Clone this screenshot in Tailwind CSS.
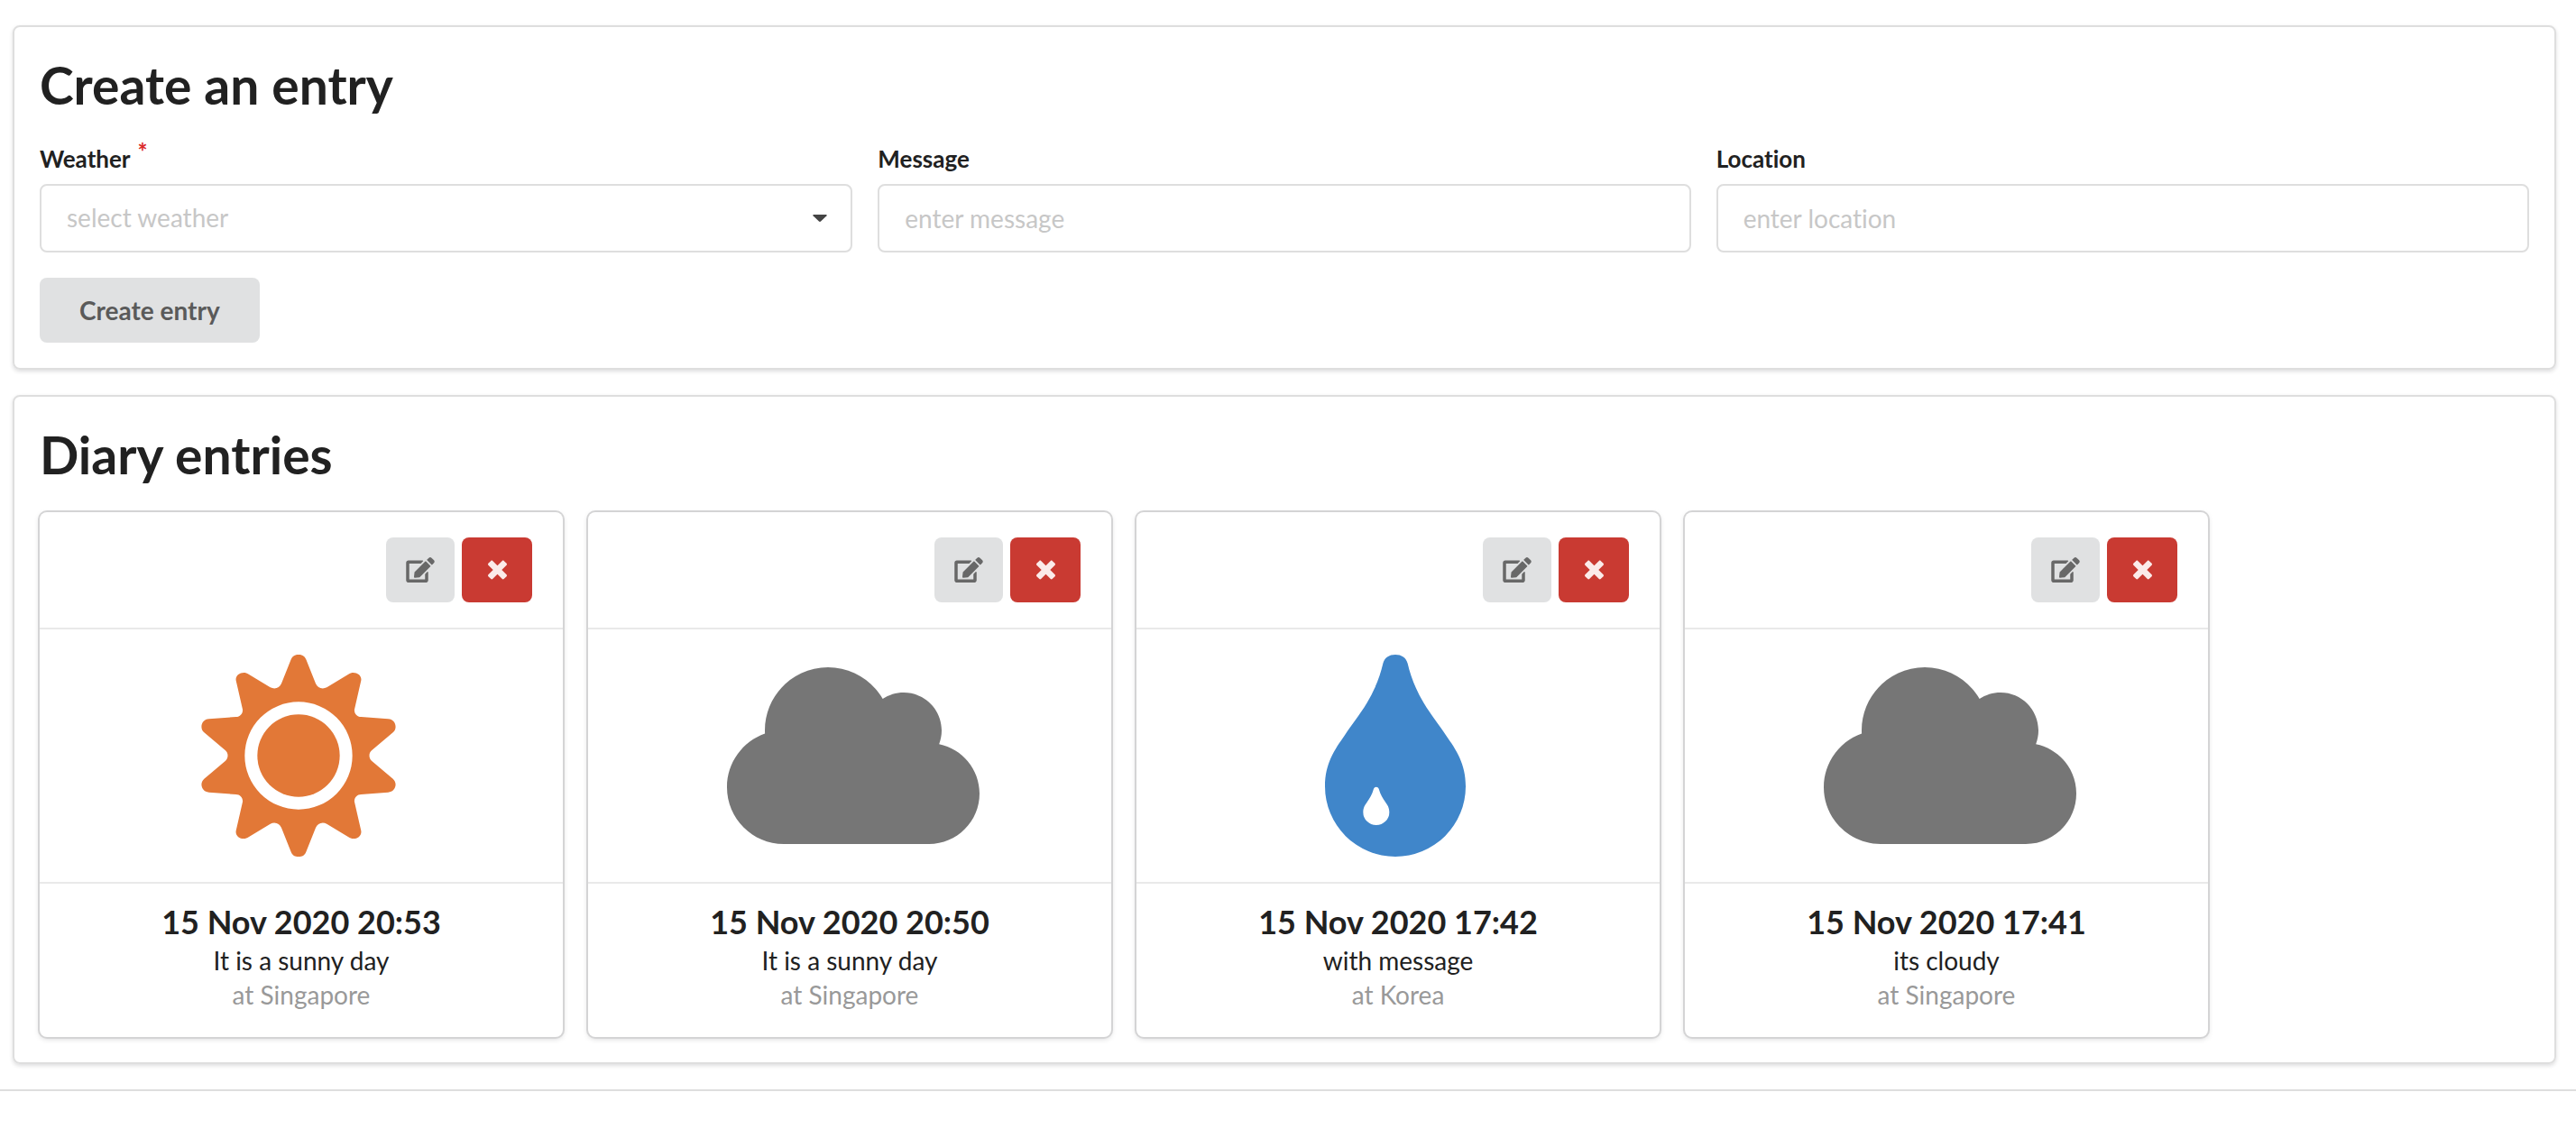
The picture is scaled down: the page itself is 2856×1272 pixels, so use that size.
<!DOCTYPE html>
<html lang="en">
<head>
<meta charset="utf-8">
<title>Weather diary</title>
<script src="https://cdn.jsdelivr.net/npm/@tailwindcss/browser@4"></script>
</head>
<body class="bg-white font-['Lato',sans-serif] text-[28px] text-[#212121] [font-variant-ligatures:no-common-ligatures]">
<svg class="hidden" aria-hidden="true">
  <symbol id="edit" viewBox="0 0 576 512"><path d="M402.6 83.2l90.2 90.2c3.8 3.8 3.8 10 0 13.8L274.4 405.6l-92.8 10.3c-12.4 1.4-22.9-9.1-21.5-21.5l10.3-92.8L388.8 83.2c3.8-3.8 10-3.8 13.8 0zm162-22.9l-48.8-48.8c-15.2-15.2-39.9-15.2-55.2 0l-35.4 35.4c-3.8 3.8-3.8 10 0 13.8l90.2 90.2c3.8 3.8 10 3.8 13.8 0l35.4-35.4c15.2-15.3 15.2-40 0-55.2zM384 346.2V448H64V128h229.8c3.2 0 6.2-1.3 8.5-3.5l40-40c7.6-7.6 2.2-20.5-8.5-20.5H48C21.5 64 0 85.5 0 112v352c0 26.5 21.5 48 48 48h352c26.5 0 48-21.5 48-48V306.2c0-10.7-12.9-16-20.5-8.5l-40 40c-2.2 2.3-3.5 5.3-3.5 8.5z"/></symbol>
  <symbol id="times" viewBox="0 0 384 512"><path d="M323.1 441l53.9-53.9c9.4-9.4 9.4-24.5 0-33.9L279.8 256l97.2-97.2c9.4-9.4 9.4-24.5 0-33.9L323.1 71c-9.4-9.4-24.5-9.4-33.9 0L192 168.2 94.8 71c-9.4-9.4-24.5-9.4-33.9 0L7 124.9c-9.4 9.4-9.4 24.5 0 33.9l97.2 97.2L7 353.2c-9.4 9.4-9.4 24.5 0 33.9L60.9 441c9.4 9.4 24.5 9.4 33.9 0l97.2-97.2 97.2 97.2c9.3 9.3 24.5 9.3 33.9 0z"/></symbol>
  <symbol id="sun" viewBox="-336 -336 672 672"><path fill-rule="evenodd" d="M0-336C12-336 20-332 25-320L57-240C63-226 78-219 94-227L166-271C183-284 212-272 208-250L186-154C184-142 194-129 208-129L298-122C322-121 331-92 314-77L243-17C233-8 233 8 243 17L314 77C331 92 322 121 298 122L208 129C194 129 184 142 186 154L208 250C212 272 183 284 166 271L94 227C78 219 63 226 57 240L25 320C20 332 12 336 0 336C-12 336-20 332-25 320L-57 240C-63 226-78 219-94 227L-166 271C-183 284-212 272-208 250L-186 154C-184 142-194 129-208 129L-298 122C-322 121-331 92-314 77L-243 17C-233 8-233-8-243-17L-314-77C-331-92-322-121-298-122L-208-129C-194-129-184-142-186-154L-208-250C-212-272-183-284-166-271L-94-227C-78-219-63-226-57-240L-25-320C-20-332-12-336 0-336ZM0-179A179 179 0 1 0 0 179A179 179 0 1 0 0-179Z"/><circle r="137"/></symbol>
  <symbol id="cloud" viewBox="0 0 640 512"><path d="M537.6 226.6c4.1-10.7 6.4-22.4 6.4-34.6 0-53-43-96-96-96-19.7 0-38.1 6-53.3 16.2C367 64.2 315.3 32 256 32c-88.4 0-160 71.6-160 160 0 2.7.1 5.4.2 8.1C40.2 219.8 0 273.2 0 336c0 79.5 64.5 144 144 144h368c70.7 0 128-57.3 128-128 0-61.9-44-113.6-102.4-125.4z"/></symbol>
  <symbol id="drop" viewBox="86 78 468 672"><path fill-rule="evenodd" d="M320 78C299 78 284 88 279 107C270 147 252 195 226 238C200 281 178 307 151 347C118 394 86 440 86 516A234 234 0 0 0 554 516C554 440 522 394 489 347C462 307 440 281 414 238C388 195 370 147 361 107C356 88 341 78 320 78ZM256.500 518C252 518 250 520 248 524C243 543 234 556 227 567C219 579 213 586 213 602A43.500 43 0 0 0 300 602C300 586 294 579 286 567C279 556 270 543 265 524C263 520 261 518 256.500 518Z"/></symbol>
</svg>
<main class="flex flex-col gap-7 border-b-2 border-[#dedede] pt-7 pr-[22px] pb-7 pl-[14px] shadow-[0_2px_4px_rgba(34,36,38,0.15)]">
  <section class="rounded-lg border-2 border-[#dedede] p-7 shadow-[0_2px_4px_rgba(34,36,38,0.15)]">
    <h1 class="mb-7 text-[57px] leading-[72px] font-bold">Create an entry</h1>
    <form>
      <div class="grid grid-cols-3 gap-7">
        <div>
          <label for="weather" class="mb-[10px] flex text-[26px] leading-9 font-bold">Weather<span class="-mt-2 ml-2 text-[#db2828]">*</span></label>
          <div class="relative">
            <select id="weather" class="block h-[76px] w-full appearance-none rounded-lg border-2 border-[#dedede] bg-white px-7 pb-[2px] text-[#c7c7c7]"><option>select weather</option></select>
            <svg class="pointer-events-none absolute top-[34px] right-7 h-2 w-4 fill-[#444]" viewBox="0 0 16 8"><path d="M1 0h14q1 .5.500 1.200L9 7.500q-1 .8-2 0L.500 1.200Q0 .5 1 0z"/></svg>
          </div>
        </div>
        <div>
          <label for="message" class="mb-[10px] block text-[26px] leading-9 font-bold">Message</label>
          <input id="message" type="text" placeholder="enter message" class="block h-[76px] w-full rounded-lg border-2 border-[#dedede] px-7 placeholder:text-[#c7c7c7]">
        </div>
        <div>
          <label for="location" class="mb-[10px] block text-[26px] leading-9 font-bold">Location</label>
          <input id="location" type="text" placeholder="enter location" class="block h-[76px] w-full rounded-lg border-2 border-[#dedede] px-7 placeholder:text-[#c7c7c7]">
        </div>
      </div>
      <button type="submit" class="mt-7 block h-[72px] rounded-lg bg-[#e0e1e2] px-11 font-bold text-[#5a5a5a]">Create entry</button>
    </form>
  </section>

  <section class="rounded-lg border-2 border-[#dedede] p-7 shadow-[0_2px_4px_rgba(34,36,38,0.15)]">
    <h1 class="mb-7 text-[57px] leading-[72px] font-bold">Diary entries</h1>
    <div class="flex flex-wrap gap-7">
      <article class="w-[580px] rounded-lg bg-white shadow-[0_0_0_2px_#d4d4d5,0_2px_6px_#d4d4d5]">
        <div class="flex justify-end gap-2 py-7 pr-[34px]">
          <button type="button" aria-label="Edit" class="flex h-[72px] w-[76px] items-center justify-center rounded-lg bg-[#e0e1e2]"><svg class="h-7 w-8 fill-[#686868]"><use href="#edit"/></svg></button>
          <button type="button" aria-label="Delete" class="flex h-[72px] w-[78px] items-center justify-center rounded-lg bg-[#c93a32]"><svg class="h-7 w-[21px] fill-[#fbebea]"><use href="#times"/></svg></button>
        </div>
        <div class="flex justify-center border-y-2 border-[#e9e9e9] py-7 pr-[6px]"><svg class="h-56 w-56 fill-[#e27837]"><use href="#sun"/></svg></div>
        <div class="px-7 pt-5 pb-7 text-center leading-[38px]">
          <h2 class="mb-[2px] text-[36px] leading-11 font-bold">15 Nov 2020 20:53</h2>
          <p>It is a sunny day</p>
          <p class="text-[#999]">at Singapore</p>
        </div>
      </article>
      <article class="w-[580px] rounded-lg bg-white shadow-[0_0_0_2px_#d4d4d5,0_2px_6px_#d4d4d5]">
        <div class="flex justify-end gap-2 py-7 pr-[34px]">
          <button type="button" aria-label="Edit" class="flex h-[72px] w-[76px] items-center justify-center rounded-lg bg-[#e0e1e2]"><svg class="h-7 w-8 fill-[#686868]"><use href="#edit"/></svg></button>
          <button type="button" aria-label="Delete" class="flex h-[72px] w-[78px] items-center justify-center rounded-lg bg-[#c93a32]"><svg class="h-7 w-[21px] fill-[#fbebea]"><use href="#times"/></svg></button>
        </div>
        <div class="flex justify-center border-y-2 border-[#e9e9e9] py-7 pl-2"><svg class="h-56 w-[280px] fill-[#767676]"><use href="#cloud"/></svg></div>
        <div class="px-7 pt-5 pb-7 text-center leading-[38px]">
          <h2 class="mb-[2px] text-[36px] leading-11 font-bold">15 Nov 2020 20:50</h2>
          <p>It is a sunny day</p>
          <p class="text-[#999]">at Singapore</p>
        </div>
      </article>
      <article class="w-[580px] rounded-lg bg-white shadow-[0_0_0_2px_#d4d4d5,0_2px_6px_#d4d4d5]">
        <div class="flex justify-end gap-2 py-7 pr-[34px]">
          <button type="button" aria-label="Edit" class="flex h-[72px] w-[76px] items-center justify-center rounded-lg bg-[#e0e1e2]"><svg class="h-7 w-8 fill-[#686868]"><use href="#edit"/></svg></button>
          <button type="button" aria-label="Delete" class="flex h-[72px] w-[78px] items-center justify-center rounded-lg bg-[#c93a32]"><svg class="h-7 w-[21px] fill-[#fbebea]"><use href="#times"/></svg></button>
        </div>
        <div class="flex justify-center border-y-2 border-[#e9e9e9] py-7 pr-[6px]"><svg class="h-56 w-[156px] fill-[#4086ca]"><use href="#drop"/></svg></div>
        <div class="px-7 pt-5 pb-7 text-center leading-[38px]">
          <h2 class="mb-[2px] text-[36px] leading-11 font-bold">15 Nov 2020 17:42</h2>
          <p>with message</p>
          <p class="text-[#999]">at Korea</p>
        </div>
      </article>
      <article class="w-[580px] rounded-lg bg-white shadow-[0_0_0_2px_#d4d4d5,0_2px_6px_#d4d4d5]">
        <div class="flex justify-end gap-2 py-7 pr-[34px]">
          <button type="button" aria-label="Edit" class="flex h-[72px] w-[76px] items-center justify-center rounded-lg bg-[#e0e1e2]"><svg class="h-7 w-8 fill-[#686868]"><use href="#edit"/></svg></button>
          <button type="button" aria-label="Delete" class="flex h-[72px] w-[78px] items-center justify-center rounded-lg bg-[#c93a32]"><svg class="h-7 w-[21px] fill-[#fbebea]"><use href="#times"/></svg></button>
        </div>
        <div class="flex justify-center border-y-2 border-[#e9e9e9] py-7 pl-2"><svg class="h-56 w-[280px] fill-[#767676]"><use href="#cloud"/></svg></div>
        <div class="px-7 pt-5 pb-7 text-center leading-[38px]">
          <h2 class="mb-[2px] text-[36px] leading-11 font-bold">15 Nov 2020 17:41</h2>
          <p>its cloudy</p>
          <p class="text-[#999]">at Singapore</p>
        </div>
      </article>
    </div>
  </section>
</main>
</body>
</html>
